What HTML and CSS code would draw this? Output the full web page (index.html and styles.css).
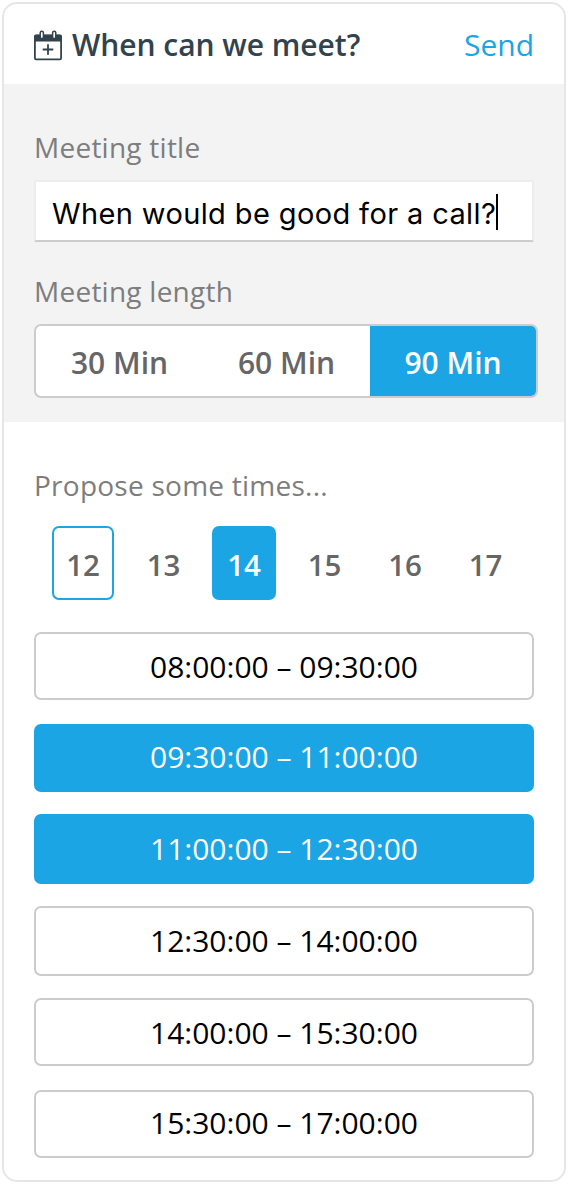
FILE: index.html
```html
<!DOCTYPE html>
<html lang="en">
<head>
<meta charset="utf-8">
<title>When can we meet?</title>
<link rel="stylesheet" href="styles.css">
</head>
<body>
<main class="card">
  <header class="header">
    <svg class="calendar" viewBox="0 0 28 31" width="28" height="31" aria-hidden="true">
      <path class="solid" d="M2 4.4H26Q28 4.4 28 6.4V11.4H0V6.4Q0 4.4 2 4.4Z"/>
      <rect class="frame" x="0.9" y="5.6" width="26.2" height="23.8" rx="1.3"/>
      <rect class="ring" x="6.2" y="1.2" width="3.2" height="7.4" rx="1.6"/>
      <rect class="ring" x="18.6" y="1.2" width="3.2" height="7.4" rx="1.6"/>
      <path class="plus" d="M14 14.2V24.8M8.7 19.5H19.3"/>
    </svg>
    <h1 class="title">When can we meet?</h1>
    <a class="send">Send</a>
  </header>
  <section class="details">
    <div class="label">Meeting title</div>
    <div class="field"><span class="value">When would be good for a call?</span><span class="caret"></span></div>
    <div class="label label-length">Meeting length</div>
    <div class="segments">
      <div class="segment">30 Min</div>
      <div class="segment">60 Min</div>
      <div class="segment chosen">90 Min</div>
    </div>
  </section>
  <section class="times">
    <div class="label">Propose some times...</div>
    <div class="days">
      <div class="day today">12</div>
      <div class="day">13</div>
      <div class="day picked">14</div>
      <div class="day">15</div>
      <div class="day">16</div>
      <div class="day">17</div>
    </div>
    <div class="slots">
      <div class="slot spaced">08:00:00 – 09:30:00</div>
      <div class="slot on raised">09:30:00 – 11:00:00</div>
      <div class="slot on tall">11:00:00 – 12:30:00</div>
      <div class="slot tall">12:30:00 – 14:00:00</div>
      <div class="slot spaced">14:00:00 – 15:30:00</div>
      <div class="slot raised">15:30:00 – 17:00:00</div>
    </div>
  </section>
</main>
</body>
</html>
```
FILE: styles.css
```css
* { box-sizing: border-box; }
body {
  margin: 0;
  padding: 2px 4px 2px 2px;
  background: #fff;
  font-family: "Open Sans", sans-serif;
}
.card {
  height: 1180px;
  border: 2px solid #e6e6e6;
  border-radius: 15px;
  overflow: hidden;
  background: #fff;
}
.header {
  display: flex;
  align-items: flex-start;
  height: 80px;
  padding: 26px 30px 0;
}
.calendar { display: block; flex: none; }
.solid { fill: #32434d; }
.frame { fill: none; stroke: #32434d; stroke-width: 1.8; }
.ring { fill: #fff; stroke: #32434d; stroke-width: 1.5; }
.plus { fill: none; stroke: #32434d; stroke-width: 1.8; }
.title {
  margin: -5px 0 0 10px;
  font-size: 30px;
  font-weight: 600;
  line-height: 40px;
  letter-spacing: -0.04px;
  color: #32434d;
  white-space: nowrap;
}
.send {
  margin: -5px 0 0 auto;
  font-size: 30px;
  line-height: 40px;
  color: #1ba5e4;
}
.details {
  height: 338px;
  padding: 43px 26px 0 30px;
  background: #f3f3f3;
}
.label {
  height: 40px;
  font-size: 28px;
  line-height: 40px;
  color: #7d7d7d;
  letter-spacing: 0.25px;
}
.field {
  display: flex;
  align-items: center;
  width: 500px;
  height: 62px;
  margin-top: 13px;
  padding: 6px 0 0 16px;
  border: 2px solid #ededed;
  border-bottom-color: #ccc;
  background: #fff;
  color: #000;
  font: 29px/40px Inter, sans-serif;
  letter-spacing: 0.38px;
  white-space: nowrap;
}
.caret { width: 2px; height: 36px; margin-top: -4px; background: #000; }
.label-length { margin-top: 29px; }
.segments {
  display: grid;
  grid-template-columns: 167px 167px 166px;
  height: 74px;
  margin-top: 13px;
  border: 2px solid #ccc;
  border-radius: 7px;
  overflow: hidden;
  background: #fff;
}
.segment {
  font-size: 30px;
  font-weight: 600;
  line-height: 74px;
  text-align: center;
  color: #666;
}
.segment.chosen { background: #1ba5e4; color: #fff; }
.times { padding: 43px 30px 0; }
.days {
  display: grid;
  grid-template-columns: repeat(6, 80.5px);
  justify-items: center;
  margin: 21px 0 0 8.75px;
}
.day {
  width: 64px;
  height: 74px;
  border-radius: 7px;
  font-size: 29.5px;
  font-weight: 600;
  line-height: 77px;
  text-align: center;
  color: #666;
}
.today { width: 62px; border: 2px solid #1ba5e4; line-height: 73px; }
.picked { background: #1ba5e4; color: #fff; }
.slots {
  display: flex;
  flex-direction: column;
  margin-top: 32px;
}
.slot {
  height: 68px;
  margin-bottom: 22px;
  padding-top: 13px;
  border: 2px solid #ccc;
  border-radius: 7px;
  font-size: 30px;
  line-height: 40px;
  text-align: center;
  color: #000;
}
.slot.tall { height: 70px; }
.slot.spaced { margin-bottom: 24px; }
.slot.raised { padding-top: 11px; }
.slot.on { border-color: #1ba5e4; background: #1ba5e4; color: #fff; }
```
